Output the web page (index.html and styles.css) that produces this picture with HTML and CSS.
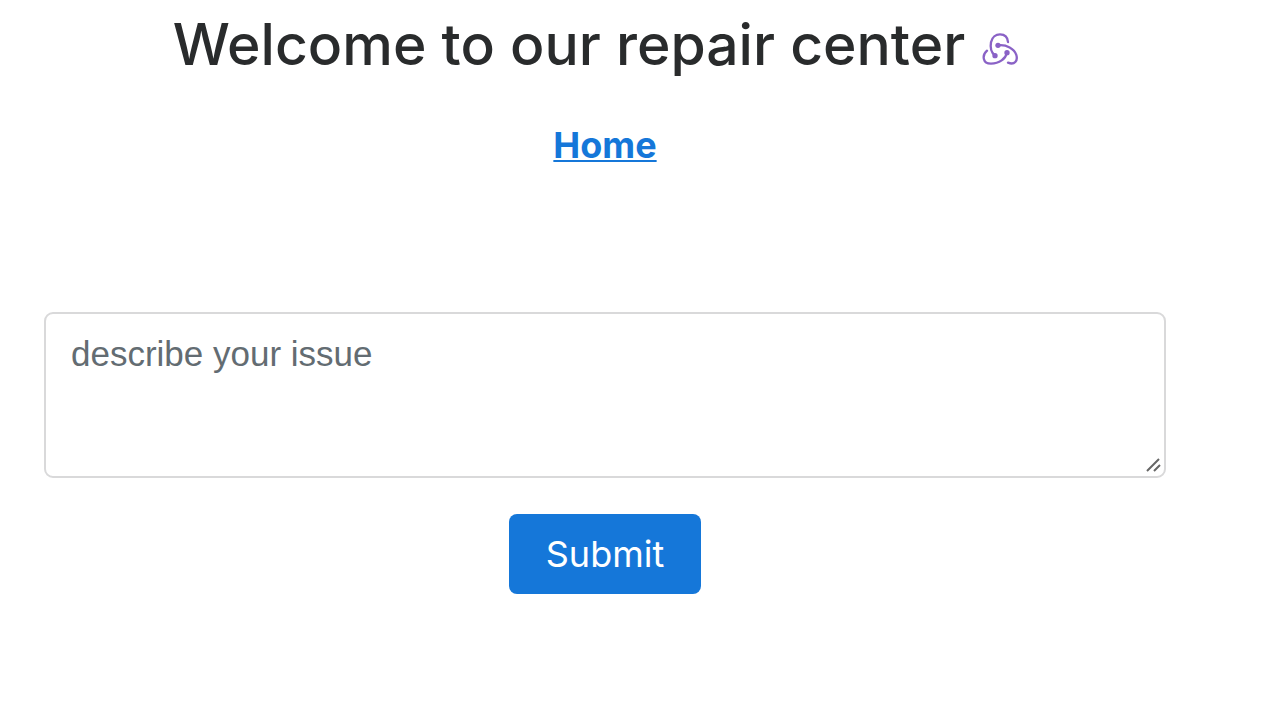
FILE: index.html
```html
<!DOCTYPE html>
<html lang="en">
<head>
<meta charset="utf-8">
<meta name="viewport" content="width=device-width, initial-scale=1">
<title>Repair center</title>
<link rel="stylesheet" href="styles.css">
</head>
<body>
<main class="page">
  <header class="header">
    <h1 class="title">Welcome to our repair center</h1>
    <svg class="logo" viewBox="6 6 108 99" aria-hidden="true">
      <g fill="none" stroke="currentColor" stroke-width="7" stroke-linecap="round">
        <path d="M45 77C34 68 30 53 33 37C36 21 48 13 60 13C75 13 83 22 84 36"/>
        <path d="M54 46C80 43 103 56 109 75C114 92 104 106 84 98"/>
        <path d="M81 68C77 86 58 101 33 101C8 101 5 76 21 62"/>
      </g>
      <g fill="currentColor"><circle cx="45" cy="77" r="8"/><circle cx="54" cy="46" r="8"/><circle cx="81" cy="68" r="8"/></g>
    </svg>
  </header>
  <nav class="nav"><a class="nav-link" href="#">Home</a></nav>
  <form class="form">
    <div class="field">
      <textarea class="issue" aria-label="Issue" placeholder="describe your issue"></textarea>
      <svg class="grip" viewBox="0 0 16 16" aria-hidden="true"><path d="M2 14 14 2M9 14l6-6" fill="none" stroke="currentColor" stroke-width="2"/></svg>
    </div>
    <button class="submit" type="submit">Submit</button>
  </form>
</main>
</body>
</html>
```

FILE: styles.css
```css
* { box-sizing: border-box; }

body {
  margin: 0;
  background: #fff;
  color: #292b2c;
  font-family: Inter, "Liberation Sans", sans-serif;
}

.page {
  padding: 12px 98px 48px 44px;
}

.header {
  display: flex;
  justify-content: center;
  align-items: center;
  gap: 17px;
  padding-right: 19px;
}

.title {
  margin: 0;
  font-size: 57px;
  font-weight: 500;
  line-height: 66px;
}

.logo {
  flex: none;
  width: 36px;
  height: 33px;
  margin-top: 6px;
  color: #8a62c6;
}

.nav {
  margin-top: 43px;
  text-align: center;
  line-height: 48px;
}

.nav-link {
  color: #1577d9;
  font-size: 36px;
  font-weight: 700;
  text-decoration-thickness: 2px;
  text-underline-offset: 2px;
}

.form {
  display: flex;
  flex-direction: column;
  align-items: center;
  gap: 36px;
  margin-top: 136px;
}

.field {
  position: relative;
  width: 100%;
}

.issue {
  display: block;
  width: 100%;
  height: 166px;
  padding: 18px 25px;
  border: 2px solid #d9d9da;
  border-radius: 9px;
  background: #fff;
  color: #464a4c;
  font: 35px/44px "Liberation Sans", Arial, sans-serif;
  resize: none;
}

.issue::placeholder {
  color: #636c72;
  opacity: 1;
}

.grip {
  position: absolute;
  right: 5px;
  bottom: 5px;
  width: 16px;
  height: 16px;
  color: #666;
}

.submit {
  min-width: 192px;
  padding: 16px 36px;
  border: 0;
  border-radius: 8px;
  background: #1577d9;
  color: #fff;
  font: 36px/48px Inter, "Liberation Sans", sans-serif;
  cursor: pointer;
}
```
